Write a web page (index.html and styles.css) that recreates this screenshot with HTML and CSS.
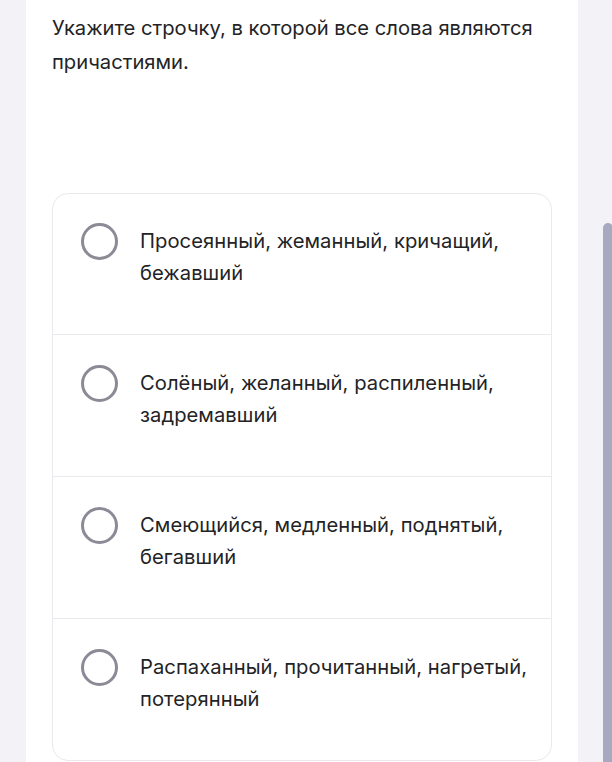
FILE: index.html
```html
<!DOCTYPE html>
<html lang="ru">
<head>
<meta charset="utf-8">
<link rel="stylesheet" href="styles.css">
</head>
<body>
<div class="page">
  <main class="panel">
    <p class="question">Укажите строчку, в которой все слова являются причастиями.</p>
    <ul class="options">
      <li class="option"><span class="radio"></span><span class="label">Просеянный, жеманный, кричащий, бежавший</span></li>
      <li class="option"><span class="radio"></span><span class="label">Солёный, желанный, распиленный, задремавший</span></li>
      <li class="option"><span class="radio"></span><span class="label">Смеющийся, медленный, поднятый, бегавший</span></li>
      <li class="option"><span class="radio"></span><span class="label">Распаханный, прочитанный, нагретый, потерянный</span></li>
    </ul>
  </main>
  <div class="scrollbar"><div class="thumb"></div></div>
</div>
</body>
</html>
```
FILE: styles.css
```css
html, body {
  margin: 0;
  padding: 0;
  height: 100%;
  overflow: hidden;
  background: #f2f2f7;
}
.page {
  display: flex;
  height: 762px;
  font-family: Inter, "Noto Sans", sans-serif;
  color: #232326;
}
.panel {
  margin-left: 26px;
  width: 552px;
  background: #ffffff;
  box-sizing: border-box;
  padding: 11px 26px 0 26px;
  overflow: hidden;
}
.question {
  margin: 0;
  font-size: 20.2px;
  line-height: 34px;
  width: 500px;
}
.options {
  list-style: none;
  margin: 114px 0 0 0;
  padding: 0;
  width: 500px;
  box-sizing: border-box;
  border: 1px solid #e9e9ee;
  border-radius: 16px;
}
.option {
  display: flex;
  align-items: flex-start;
  padding: 32px 20px 45px 28px;
  border-top: 1px solid #e9e9ee;
  height: 142px;
  box-sizing: border-box;
}
.option:first-child {
  border-top: none;
  height: 140px;
  padding-top: 31px;
}
.radio {
  flex: none;
  width: 37px;
  height: 37px;
  box-sizing: border-box;
  border: 3.5px solid #8b8a96;
  border-radius: 50%;
  margin-top: -2px;
}
.label {
  margin-left: 22px;
  font-size: 20.2px;
  letter-spacing: 0.05px;
  line-height: 32px;
}
.scrollbar {
  flex: 1;
  position: relative;
}
.thumb {
  position: absolute;
  left: 25px;
  top: 223px;
  width: 10px;
  bottom: 0;
  background: #a8a8c0;
  border-radius: 5px 5px 0 0;
}
```
